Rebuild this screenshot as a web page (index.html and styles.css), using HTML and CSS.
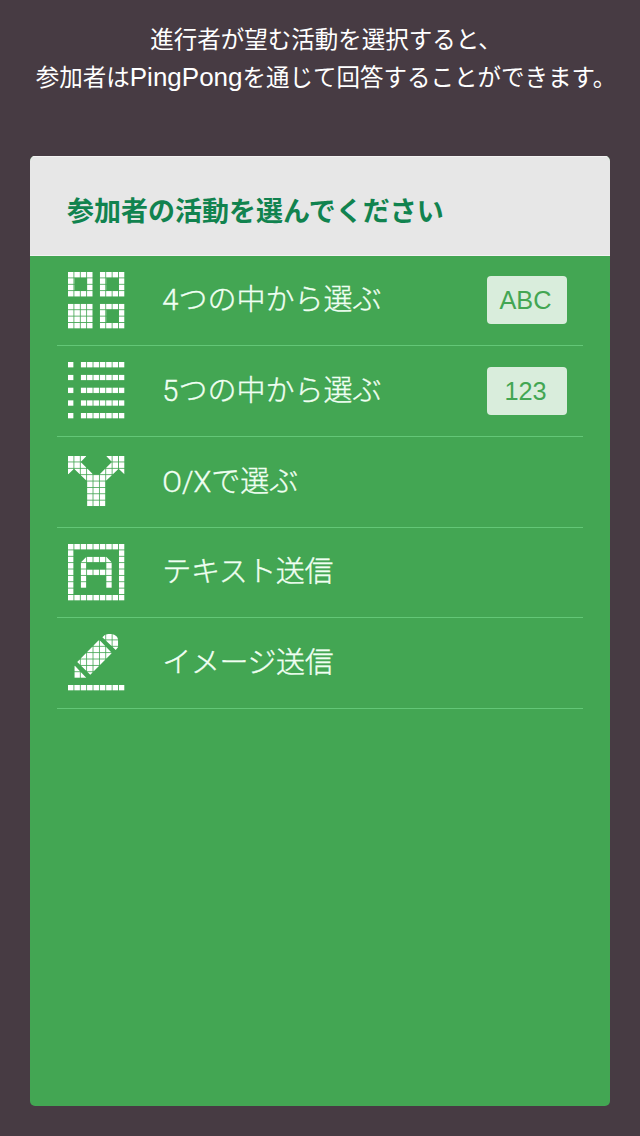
FILE: index.html
```html
<!DOCTYPE html>
<html lang="ja">
<head>
<meta charset="utf-8">
<title>PingPong</title>
<link rel="stylesheet" href="styles.css">
</head>
<body>
<svg class="defs" width="0" height="0" aria-hidden="true">
  <defs>
    <pattern id="cells" width="10" height="10" patternUnits="userSpaceOnUse">
      <rect width="8.700" height="8.700" fill="#fff"/>
    </pattern>
  </defs>
</svg>
<p class="intro">進行者が望む活動を選択すると、<br>参加者は<span class="brand">PingPong</span>を通じて回答することができます。</p>
<main class="panel">
  <h1 class="title">参加者の活動を選んでください</h1>
  <ul class="list">
    <li class="row">
      <svg class="icon" viewBox="0 0 90 90"><path fill="url(#cells)" fill-rule="evenodd" d="M0 0h39v39H0zM10 9v21h20V9zM50 0h39v39H50zM60 9v21h20V9zM0 50h39v39H0zM50 50h39v39H50zM60 59v21h20V59z"/></svg>
      <span class="label">4つの中から選ぶ</span>
      <span class="badge">ABC</span>
    </li>
    <li class="row">
      <svg class="icon" viewBox="0 0 90 90"><path fill="url(#cells)" d="M0 0h9v9H0zM20 0h69v9H20zM0 20h9v9H0zM20 20h69v9H20zM0 40h9v9H0zM20 40h69v9H20zM0 60h9v9H0zM20 60h69v9H20zM0 80h9v9H0zM20 80h69v9H20z"/></svg>
      <span class="label">5つの中から選ぶ</span>
      <span class="badge">123</span>
    </li>
    <li class="row">
      <svg class="icon fork" viewBox="0 0 90 80"><path fill="url(#cells)" d="M0 0H29L20 9.5L40 29.500H49L69 9.500L60 0H89V29L79.500 20L59 39.500V79H30V39.500L9.500 20L0 29Z"/></svg>
      <span class="label">O/Xで選ぶ</span>
    </li>
    <li class="row">
      <svg class="icon" viewBox="0 0 90 90"><path fill="url(#cells)" fill-rule="evenodd" d="M0 0H89V89H0zM9 9V80H80V9zM20 69V29L29 20H60L69 29V69H60V49H29V69zM29 29V40H60V29z"/></svg>
      <span class="label kana">テキスト送信</span>
    </li>
    <li class="row">
      <svg class="icon" viewBox="0 0 90 90"><path fill="url(#cells)" d="M0 80H89V89H0zM10 49L29 69H10zM49 9L69 30L35 64L14.500 44zM54 5Q58 0 63 0H69Q79 2 79 11V20L75 25z"/></svg>
      <span class="label kana">イメージ送信</span>
    </li>
  </ul>
</main>
</body>
</html>
```
FILE: styles.css
```css
* { box-sizing: border-box; }
body {
  margin: 0;
  height: 1136px;
  padding: 21px 30px 30px;
  display: flex;
  flex-direction: column;
  background: #473b43;
  font-family: "Liberation Sans", "Noto Sans CJK JP", sans-serif;
}
.defs { position: absolute; }
.intro {
  margin: 0 -26px 0 -14px;
  height: 135px;
  color: #fff;
  font-size: 23.5px;
  line-height: 38px;
  text-align: center;
  white-space: nowrap;
}
.brand { font-size: 26px; line-height: 1; }
.panel {
  flex: 1;
  border-radius: 5px;
  overflow: hidden;
  background: #43a653;
}
.title {
  margin: 0;
  height: 99.500px;
  padding: 7px 36px 0 37px;
  display: flex;
  align-items: center;
  background: #e7e7e7;
  border-top: 1px solid #f3f3f3;
  border-bottom: 1px solid #f3f3f3;
  color: #11834f;
  font-size: 27px;
  font-weight: 700;
  white-space: nowrap;
}
.list { margin: 0 27px; padding: 0; list-style: none; }
.row {
  height: 90.700px;
  padding: 0 16.500px 0 11px;
  display: flex;
  align-items: center;
  border-bottom: 1px solid #63c777;
}
.icon { width: 57.300px; height: 57.300px; flex: none; }
.fork { height: 51px; }
.label {
  flex: 1;
  margin-left: 37px;
  color: #f0fff2;
  font-family: Roboto, "Noto Sans CJK JP", sans-serif;
  font-size: 29px;
  font-weight: 300;
  line-height: 40px;
  white-space: nowrap;
  -webkit-text-stroke: .35px #f0fff2;
}
.kana { letter-spacing: -.4px; }
.badge {
  width: 80px;
  height: 48px;
  margin-top: -1px;
  border-radius: 4px;
  display: flex;
  align-items: center;
  justify-content: center;
  padding: 2px 2px 0 0;
  background: #d9eddc;
  color: #43a653;
  font-size: 25.300px;
}
```
